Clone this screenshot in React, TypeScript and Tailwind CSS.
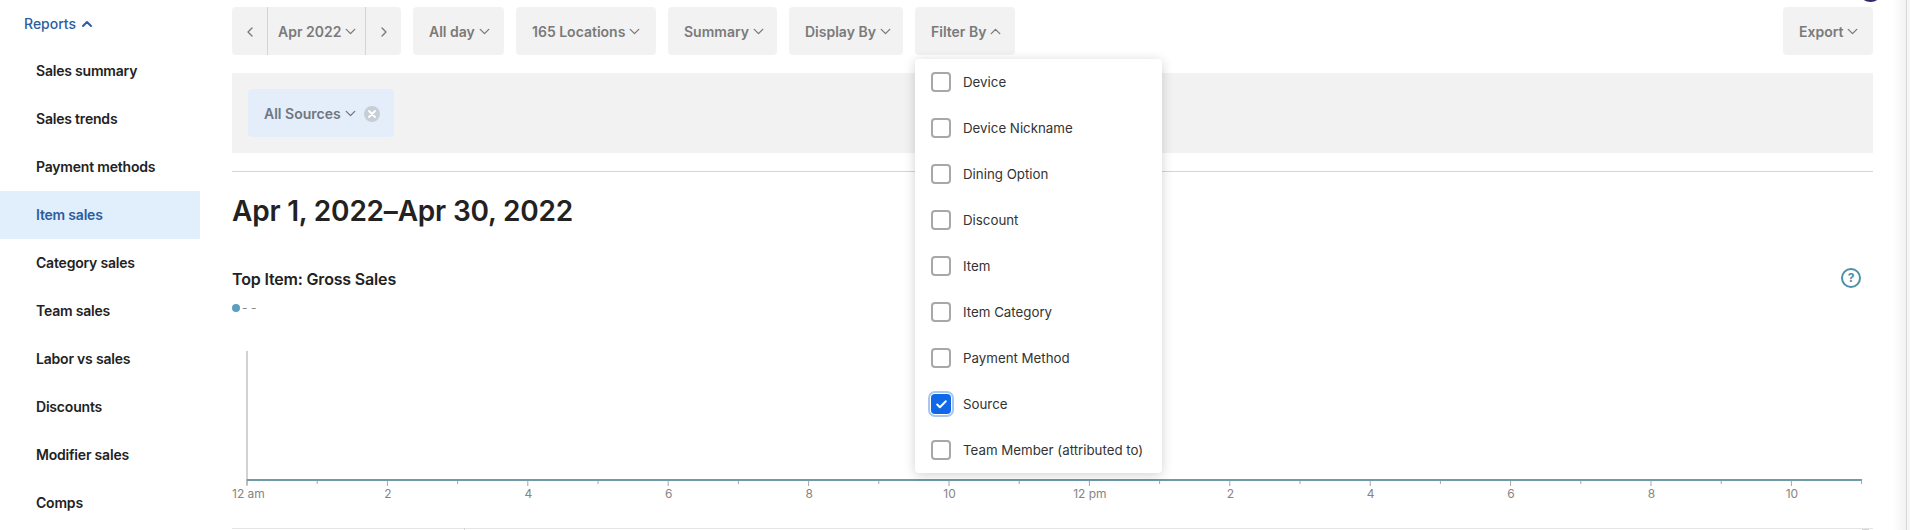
import { ChevronDown, ChevronLeft, ChevronRight, ChevronUp, Check } from 'lucide-react';

const NAV_ITEMS = [
  'Sales summary',
  'Sales trends',
  'Payment methods',
  'Item sales',
  'Category sales',
  'Team sales',
  'Labor vs sales',
  'Discounts',
  'Modifier sales',
  'Comps',
];

const TOOLBAR = [
  { label: 'All day', width: 'w-[91px]' },
  { label: '165 Locations', width: 'w-[140px]' },
  { label: 'Summary', width: 'w-[109px]' },
  { label: 'Display By', width: 'w-[114px]' },
];

const FILTERS = [
  'Device',
  'Device Nickname',
  'Dining Option',
  'Discount',
  'Item',
  'Item Category',
  'Payment Method',
  'Source',
  'Team Member (attributed to)',
];

const X0 = 15;
const HOUR = 70.2;
const HOUR_LABELS = ['12 am', '2', '4', '6', '8', '10', '12 pm', '2', '4', '6', '8', '10'];

function Chart() {
  const ticks = Array.from({ length: 24 }, (_, i) => i);
  return (
    <svg width="1641" height="152" className="block" style={{ fontFamily: 'Inter, sans-serif' }}>
      <line x1={X0} y1={2} x2={X0} y2={136} stroke="#a6a6a6" strokeWidth="1" />
      {ticks.map((i) => (
        <line
          key={i}
          x1={X0 + i * HOUR}
          y1={130}
          x2={X0 + i * HOUR}
          y2={i % 2 === 0 ? 137 : 135}
          stroke="#a6a6a6"
          strokeWidth="1"
        />
      ))}
      <rect x={X0} y={130} width={23 * HOUR} height={2} fill="#6f9aa8" />
      {HOUR_LABELS.map((label, i) => (
        <text
          key={i}
          x={i === 0 ? 0 : X0 + i * 2 * HOUR + 0.5}
          y={149}
          fontSize="12"
          fill="#858585"
          textAnchor={i === 0 ? 'start' : 'middle'}
        >
          {label}
        </text>
      ))}
    </svg>
  );
}

function ToolbarButton({ label, width, up }: { label: string; width: string; up?: boolean }) {
  const Icon = up ? ChevronUp : ChevronDown;
  return (
    <button
      className={`flex h-12 ${width} items-center rounded bg-[#f2f2f2] pt-px pl-4 text-sm font-semibold text-[#7a7a7a]`}
    >
      {label}
      <Icon size={17} strokeWidth={1.9} className="ml-px" />
    </button>
  );
}

function FilterRow({ label, checked }: { label: string; checked: boolean }) {
  return (
    <div className="flex h-[46px] items-center gap-3 px-4">
      {checked ? (
        <span className="flex h-5 w-5 items-center justify-center rounded bg-[#1068e8] ring-2 ring-[#a9c6ee] ring-offset-1">
          <Check size={13} strokeWidth={3.5} className="text-white" />
        </span>
      ) : (
        <span className="h-5 w-5 rounded border-2 border-[#a8a8a8] bg-white" />
      )}
      <span className="pt-px text-[13.3px] text-[#333333]">{label}</span>
    </div>
  );
}

export default function App() {
  return (
    <div className="relative flex h-[530px] overflow-hidden bg-white font-['Inter',sans-serif]">
      {/* Sidebar */}
      <aside className="w-[200px] shrink-0">
        <div className="flex h-[47px] items-center gap-[3px] pl-6 text-sm font-medium text-[#2b5d9f]">
          Reports
          <ChevronUp size={16} strokeWidth={3} />
        </div>
        {NAV_ITEMS.map((item) => (
          <div
            key={item}
            className={
              item === 'Item sales'
                ? 'flex h-12 items-center bg-[#e1eefb] pl-9 text-sm font-semibold tracking-[-0.2px] text-[#2b5d9f]'
                : 'flex h-12 items-center pl-9 text-sm font-semibold tracking-[-0.2px] text-[#222222]'
            }
          >
            {item}
          </div>
        ))}
      </aside>

      {/* Main */}
      <main className="ml-8 w-[1641px] shrink-0 pt-[7px]">
        <div className="flex gap-3">
          <div className="flex h-12 w-[169px] items-center rounded bg-[#f2f2f2] text-[#7a7a7a]">
            <span className="flex h-full w-[36px] items-center justify-center border-r border-[#d4d4d4] pt-px">
              <ChevronLeft size={16} />
            </span>
            <span className="flex h-full w-[98px] items-center border-r border-[#d4d4d4] pt-px pl-[10px] text-sm font-semibold">
              Apr 2022
              <ChevronDown size={17} strokeWidth={1.9} className="ml-px" />
            </span>
            <span className="flex h-full flex-1 items-center justify-center pt-px">
              <ChevronRight size={16} />
            </span>
          </div>
          {TOOLBAR.map(({ label, width }) => (
            <ToolbarButton key={label} label={label} width={width} />
          ))}
          <ToolbarButton label="Filter By" width="w-[100px]" up />
          <div className="ml-auto">
            <ToolbarButton label="Export" width="w-[90px]" />
          </div>
        </div>

        <div className="mt-[18px] flex h-20 items-center bg-[#f2f2f2] pl-4">
          <div className="flex h-12 w-[146px] items-center rounded bg-[#e4eefb] pt-px pl-4 text-sm font-semibold text-[#6f7680]">
            All Sources
            <ChevronDown size={17} strokeWidth={1.9} className="ml-px" />
            <span className="ml-[5px] flex h-4 w-4 items-center justify-center rounded-full bg-[#c8ced6] text-white">
              <svg width="8" height="8" viewBox="0 0 8 8">
                <path d="M1 1 L7 7 M7 1 L1 7" stroke="#ffffff" strokeWidth="1.8" strokeLinecap="round" />
              </svg>
            </span>
          </div>
        </div>

        <div className="mt-[18px] border-t border-[#d4d4d4]" />

        <h1 className="mt-[22px] text-[28px] leading-[34px] font-semibold tracking-[-0.2px] text-[#222222]">
          Apr 1, 2022–Apr 30, 2022
        </h1>

        <div className="mt-[41px] flex items-center justify-between pr-3">
          <h2 className="text-base leading-5 font-semibold tracking-[-0.17px] text-[#222222]">
            Top Item: Gross Sales
          </h2>
          <span className="-mt-0.5 flex h-5 w-5 items-center justify-center rounded-full border-2 border-[#4a90a8] text-xs font-bold text-[#4a90a8]">
            ?
          </span>
        </div>

        <div className="mt-[11px] flex h-4 items-center gap-[2px]">
          <span className="h-2 w-2 rounded-full bg-[#5a9fc0]" />
          <span className="text-xs leading-none text-[#888888]">- -</span>
        </div>

        <div className="mt-[33px]">
          <Chart />
        </div>
      </main>

      {/* Filter By dropdown */}
      <div className="absolute top-[59px] left-[915px] w-[247px] rounded bg-white shadow-[0_2px_12px_rgba(0,0,0,0.18)]">
        {FILTERS.map((label) => (
          <FilterRow key={label} label={label} checked={label === 'Source'} />
        ))}
      </div>

      {/* Line along the bottom edge, with the tops of two things below the fold */}
      <div className="absolute top-[528px] left-[232px] h-px w-[1641px] bg-[#e5e5e5]" />
      <div className="absolute top-[528px] left-[464px] h-[2px] w-px bg-[#d4d4d4]" />
      <div className="absolute top-[529px] left-[1862px] h-px w-[7px] bg-[#d4d4d4]" />

      {/* Avatar peeking in at the top */}
      <div className="absolute -top-[23px] left-[1858px] h-[25px] w-[25px] rounded-full bg-[#2c2a6a]" />

      {/* Scrollbar strip */}
      <div className="absolute top-0 right-0 flex h-[530px] w-[17px]">
        <div className="w-[13px] bg-gradient-to-r from-white to-[#f2f2f2]" />
        <div className="w-px bg-[#d8d8d8]" />
        <div className="flex-1 bg-[#f5f5f5]" />
      </div>
    </div>
  );
}
